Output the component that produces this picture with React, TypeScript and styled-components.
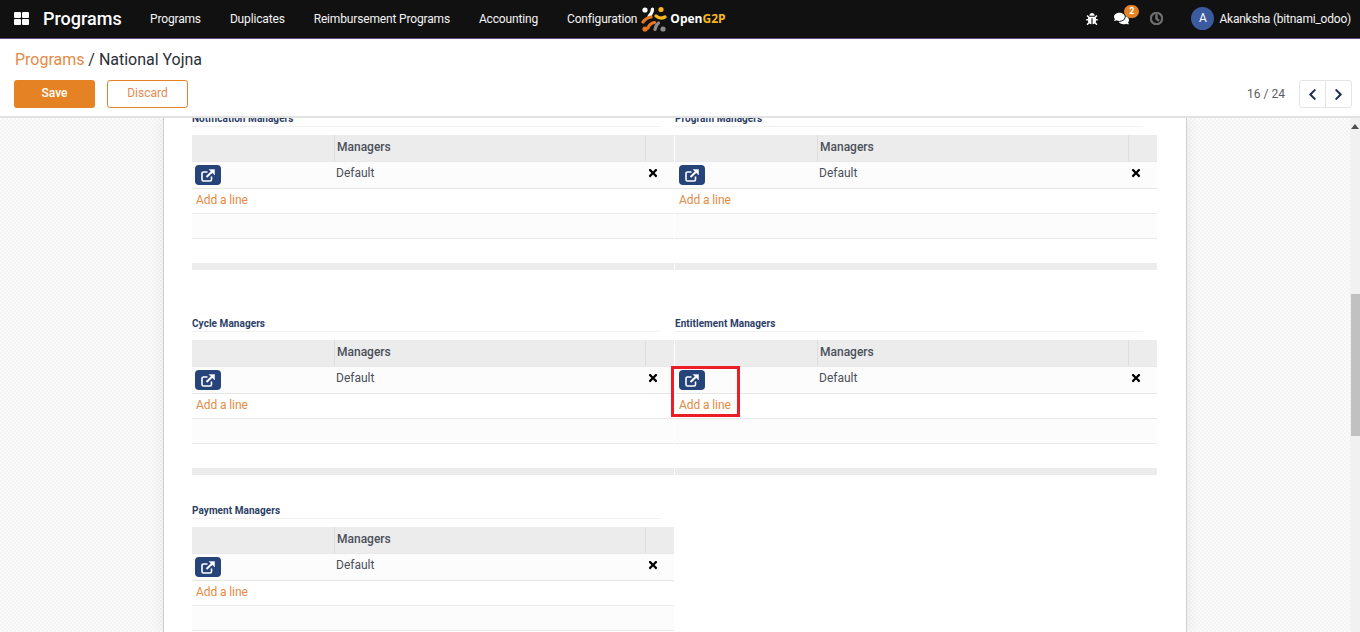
import React from 'react';
import styled, { createGlobalStyle } from 'styled-components';
import { FaBug, FaChevronLeft, FaChevronRight, FaComments, FaRegClock, FaTimes } from 'react-icons/fa';

const GlobalStyle = createGlobalStyle`
  html, body {
    margin: 0;
    height: 100%;
    overflow: hidden;
    background: #fff;
    font-family: Roboto, "Liberation Sans", sans-serif;
  }
`;

const navLinks = ['Programs', 'Duplicates', 'Reimbursement Programs', 'Accounting', 'Configuration'];

const managerRows = [
  [{ title: 'Notification Managers' }, { title: 'Program Managers' }],
  [{ title: 'Cycle Managers' }, { title: 'Entitlement Managers', marked: true }],
  [{ title: 'Payment Managers' }],
];

function AppsIcon() {
  return (
    <svg width="15" height="13" viewBox="0 0 15 13" fill="#fff">
      <rect x="0" y="0" width="7" height="6" rx="1" />
      <rect x="8" y="0" width="7" height="6" rx="1" />
      <rect x="0" y="7" width="7" height="6" rx="1" />
      <rect x="8" y="7" width="7" height="6" rx="1" />
    </svg>
  );
}

function LogoMark() {
  return (
    <svg width="26" height="26" viewBox="0 0 26 26" fill="none" strokeLinecap="round" strokeWidth="3.2">
      <circle cx="4" cy="4" r="2.6" fill="#fff" />
      <path d="M11.5 3 C11.5 6 10 8.5 8 10.5" stroke="#fff" />
      <circle cx="20" cy="3.5" r="2.6" fill="#f5b81f" />
      <path d="M15 10 C18 12.5 21 12.5 24 11" stroke="#f5b81f" />
      <path d="M2 16 C4.5 12.5 7 11.5 10 11" stroke="#e8761e" />
      <path d="M7 22 C8 19 10.5 17 13.5 16.5" stroke="#e8761e" />
      <circle cx="4" cy="23" r="2.6" fill="#e8761e" />
      <path d="M14 23.5 C14.5 20.5 15.5 18.5 17.5 17" stroke="#8c8c8c" />
      <circle cx="22" cy="23" r="2.6" fill="#8c8c8c" />
    </svg>
  );
}

function ExternalIcon() {
  return (
    <svg width="14" height="13" viewBox="0 0 14 13" fill="none" stroke="#fff">
      <path d="M10.5 7.5 V10.5 A1.5 1.5 0 0 1 9 12 H2.5 A1.5 1.5 0 0 1 1 10.5 V4.5 A1.5 1.5 0 0 1 2.5 3 H6.5" strokeWidth="1.6" />
      <path d="M5.5 8 L11.5 2.2" strokeWidth="2" />
      <path d="M8 0.4 H13.6 V6 Z" fill="#fff" strokeWidth="0.4" />
    </svg>
  );
}

function ManagerTable({ title, marked }: { title: string; marked?: boolean }) {
  return (
    <Section>
      <SectionTitle>{title}</SectionTitle>
      <TableFrame>
        <HeadRow>
          <HeadCell />
          <HeadCell>Managers</HeadCell>
          <HeadCell />
        </HeadRow>
        <DataRow>
          <Cell>
            <OpenButton>
              <ExternalIcon />
            </OpenButton>
          </Cell>
          <NameCell>Default</NameCell>
          <RemoveCell>
            <FaTimes size={12} />
          </RemoveCell>
        </DataRow>
        <AddRow>
          <AddLine>Add a line</AddLine>
        </AddRow>
        <EmptyRow />
        <BlankRow />
        <TableFoot />
        {marked && <Highlight />}
      </TableFrame>
    </Section>
  );
}

export default function App(): JSX.Element {
  return (
    <Page>
      <GlobalStyle />
      <NavBar>
        <AppsButton>
          <AppsIcon />
        </AppsButton>
        <Brand>Programs</Brand>
        <NavLinks>
          {navLinks.map((link) => (
            <NavLink key={link}>{link}</NavLink>
          ))}
        </NavLinks>
        <Logo>
          <LogoMark />
          <LogoText>
            Open<LogoAccent>G2P</LogoAccent>
          </LogoText>
        </Logo>
        <Systray>
          <TrayIcon>
            <FaBug size={12} />
          </TrayIcon>
          <ChatIcon>
            <FaComments size={15} />
            <Badge>2</Badge>
          </ChatIcon>
          <ClockIcon>
            <FaRegClock size={13} />
          </ClockIcon>
          <UserMenu>
            <Avatar>A</Avatar>
            <UserName>Akanksha (bitnami_odoo)</UserName>
          </UserMenu>
        </Systray>
      </NavBar>
      <ControlPanel>
        <Breadcrumb>
          <CrumbLink>Programs</CrumbLink> / National Yojna
        </Breadcrumb>
        <ControlRow>
          <SaveButton>Save</SaveButton>
          <DiscardButton>Discard</DiscardButton>
          <Pager>
            <PagerCount>16 / 24</PagerCount>
            <PagerGroup>
              <PagerButton>
                <FaChevronLeft size={13} />
              </PagerButton>
              <PagerButton>
                <FaChevronRight size={13} />
              </PagerButton>
            </PagerGroup>
          </Pager>
        </ControlRow>
      </ControlPanel>
      <ContentArea>
        <Backdrop>
          <Sheet>
            <SheetBody>
              {managerRows.map((row, index) => (
                <ManagerRow key={row[0].title} $gap={index === 0 ? 46 : 28}>
                  {row.map((table) => (
                    <ManagerTable key={table.title} title={table.title} marked={table.marked} />
                  ))}
                </ManagerRow>
              ))}
            </SheetBody>
          </Sheet>
        </Backdrop>
        <ScrollTrack>
          <ScrollArrow />
          <ScrollThumb />
        </ScrollTrack>
      </ContentArea>
    </Page>
  );
}

const Page = styled.div`
  width: 1360px;
  height: 632px;
  display: flex;
  flex-direction: column;
  overflow: hidden;
`;

const NavBar = styled.header`
  height: 39px;
  flex: none;
  box-sizing: border-box;
  padding-bottom: 1px;
  display: flex;
  align-items: center;
  background: #111111;
  border-bottom: 1px solid #5f4b7c;
  color: #fff;
`;

const AppsButton = styled.div`
  width: 43px;
  padding-left: 14px;
  box-sizing: border-box;
  display: flex;
  align-items: center;
`;

const Brand = styled.div`
  width: 93px;
  font-size: 18px;
  font-weight: 500;
`;

const NavLinks = styled.nav`
  display: flex;
  gap: 29px;
  margin-left: 14px;
`;

const NavLink = styled.span`
  font-size: 12px;
  letter-spacing: -0.16px;
  color: #f4f4f4;
`;

const Logo = styled.div`
  display: flex;
  align-items: center;
  gap: 3px;
  margin-left: 4px;
`;

const LogoText = styled.span`
  font-family: "Open Sans", sans-serif;
  font-size: 12px;
  font-weight: 700;
  color: #fff;
`;

const LogoAccent = styled.span`
  color: #f5b81f;
`;

const Systray = styled.div`
  margin-left: auto;
  padding-right: 9px;
  display: flex;
  align-items: center;
`;

const TrayIcon = styled.span`
  display: flex;
  margin-right: 16px;
`;

const ChatIcon = styled.span`
  position: relative;
  display: flex;
  margin-right: 21px;
`;

const Badge = styled.span`
  position: absolute;
  top: -6px;
  left: 10px;
  width: 15px;
  height: 13px;
  border-radius: 7px;
  background: #e58324;
  font-size: 9px;
  font-weight: 700;
  line-height: 13px;
  text-align: center;
`;

const ClockIcon = styled.span`
  display: flex;
  color: #6f6f6f;
  margin-right: 28px;
  svg {
    stroke: currentColor;
    stroke-width: 40;
  }
`;

const UserMenu = styled.div`
  display: flex;
  align-items: center;
  gap: 5px;
`;

const Avatar = styled.span`
  width: 23px;
  height: 23px;
  border-radius: 50%;
  background: #3c5a9e;
  font-size: 12px;
  line-height: 23px;
  text-align: center;
`;

const UserName = styled.span`
  font-size: 12px;
  letter-spacing: -0.22px;
  color: #f4f4f4;
`;

const ControlPanel = styled.div`
  height: 79px;
  flex: none;
  box-sizing: border-box;
  padding: 11px 8px 0 15px;
  background: #fff;
  border-bottom: 2px solid #e2e2e2;
`;

const Breadcrumb = styled.div`
  font-size: 16px;
  letter-spacing: -0.02px;
  line-height: 19px;
  color: #2b2f38;
`;

const CrumbLink = styled.span`
  color: #e58a45;
`;

const ControlRow = styled.div`
  display: flex;
  align-items: center;
  margin: 11px 0 0 -1px;
`;

const SaveButton = styled.div`
  width: 81px;
  height: 28px;
  border-radius: 3px;
  background: #e58324;
  color: #fff;
  font-size: 12px;
  font-weight: 500;
  line-height: 27px;
  text-align: center;
`;

const DiscardButton = styled.div`
  width: 81px;
  height: 28px;
  box-sizing: border-box;
  margin-left: 12px;
  border: 1px solid #e58324;
  border-radius: 3px;
  color: #e58a55;
  font-size: 12px;
  line-height: 25px;
  text-align: center;
`;

const Pager = styled.div`
  margin-left: auto;
  display: flex;
  align-items: center;
  gap: 14px;
`;

const PagerCount = styled.span`
  font-size: 12px;
  color: #5c5c64;
`;

const PagerGroup = styled.div`
  display: flex;
  height: 28px;
  box-sizing: border-box;
  border: 1px solid #e2e4e6;
  border-radius: 3px;
`;

const PagerButton = styled.div`
  width: 25px;
  display: flex;
  align-items: center;
  justify-content: center;
  color: #1e2f50;
  & + & {
    border-left: 1px solid #e2e4e6;
  }
`;

const ContentArea = styled.div`
  flex: 1;
  min-height: 0;
  display: flex;
`;

const Backdrop = styled.main`
  flex: 1;
  overflow: hidden;
  display: flex;
  justify-content: center;
  padding-right: 2px;
  background-color: #fafafa;
  background-image: repeating-conic-gradient(#f4f4f4 0 25%, #fbfbfb 0 50%);
  background-size: 4px 4px;
`;

const Sheet = styled.div`
  width: 1024px;
  box-sizing: border-box;
  margin-left: 2px;
  background: #fff;
  border-left: 1px solid #cfcfd4;
  border-right: 1px solid #cfcfd4;
  box-shadow: 0 0 14px rgba(0, 0, 0, 0.08);
`;

const SheetBody = styled.div`
  margin-top: -7px;
  padding-left: 28px;
`;

const ManagerRow = styled.div<{ $gap: number }>`
  display: grid;
  grid-template-columns: 482px 482px;
  column-gap: 1px;
  margin-bottom: ${(p) => p.$gap}px;
`;

const Section = styled.section`
  min-width: 0;
`;

const SectionTitle = styled.h3`
  height: 15px;
  margin: 0 14px 8px 0;
  box-sizing: content-box;
  border-bottom: 1px solid #f0f0f0;
  font-size: 10px;
  font-weight: 700;
  letter-spacing: 0.06px;
  line-height: 15px;
  color: #2c3e66;
`;

const TableFrame = styled.div`
  position: relative;
`;

const tableColumns = 'grid-template-columns: 142px 1fr 29px;';

const HeadRow = styled.div`
  display: grid;
  ${tableColumns}
  height: 26px;
  background: #ececec;
  border-bottom: 1px solid #e8e8ea;
`;

const HeadCell = styled.div`
  padding-left: 2px;
  font-size: 12px;
  font-weight: 500;
  line-height: 24px;
  color: #4a4f5a;
  & + & {
    border-left: 1px solid #dedede;
  }
`;

const DataRow = styled.div`
  display: grid;
  ${tableColumns}
  height: 26px;
  background: #fcfcfc;
  border-bottom: 1px solid #e6e6e6;
`;

const Cell = styled.div`
  padding: 3px 0 0 3px;
  section + section & {
    padding-left: 4px;
  }
`;

const NameCell = styled.div`
  padding-left: 2px;
  font-size: 12px;
  line-height: 22px;
  color: #4a4f5a;
`;

const RemoveCell = styled.div`
  display: flex;
  align-items: center;
  height: 22px;
  padding-left: 2px;
  color: #000;
`;

const OpenButton = styled.div`
  width: 26px;
  height: 20px;
  border-radius: 4px;
  background: #26437a;
  display: flex;
  align-items: center;
  justify-content: center;
`;

const AddRow = styled.div`
  height: 24px;
  border-bottom: 1px solid #e9e9ea;
  padding-left: 4px;
`;

const AddLine = styled.span`
  font-size: 12px;
  letter-spacing: -0.1px;
  line-height: 22px;
  color: #e58a45;
`;

const EmptyRow = styled.div`
  height: 24px;
  background: #fcfcfc;
  border-bottom: 1px solid #e9e9ee;
`;

const BlankRow = styled.div`
  height: 24px;
`;

const TableFoot = styled.div`
  height: 7px;
  background: #ececec;
`;

const Highlight = styled.div`
  position: absolute;
  top: 26px;
  left: -4px;
  width: 69px;
  height: 51px;
  box-sizing: border-box;
  border: 3px solid #ee1c25;
`;

const ScrollTrack = styled.div`
  position: relative;
  width: 10px;
  flex: none;
  background: #f1f1f1;
`;

const ScrollArrow = styled.div`
  width: 0;
  height: 0;
  margin: 6px auto 0;
  border-left: 4px solid transparent;
  border-right: 4px solid transparent;
  border-bottom: 5px solid #505050;
`;

const ScrollThumb = styled.div`
  position: absolute;
  top: 176px;
  left: 1px;
  right: 0;
  height: 142px;
  background: #c1c1c1;
`;
